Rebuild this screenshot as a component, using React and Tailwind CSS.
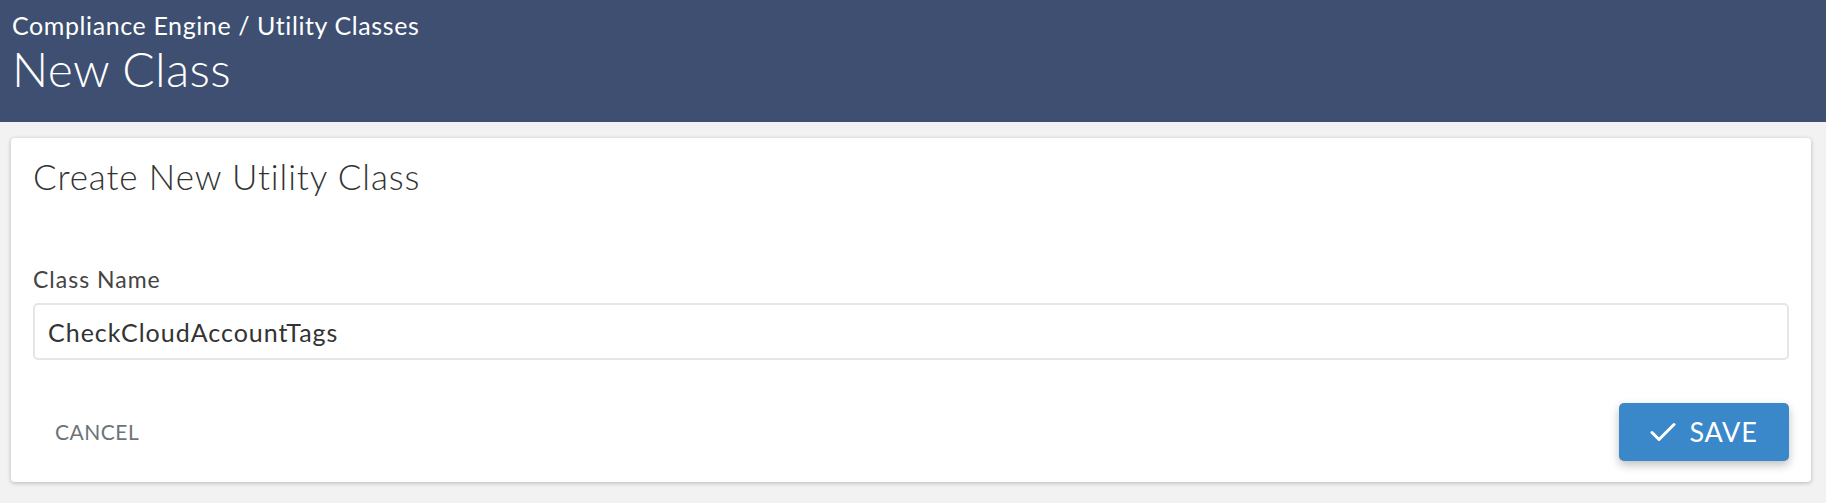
import React from 'react';

const CheckIcon = () => (
    <svg width="26" height="20" viewBox="0 0 26 20" fill="none" className="shrink-0">
        <path d="M2 10.5 L9 17.5 L24 2.5" stroke="white" strokeWidth="3" strokeLinecap="round" strokeLinejoin="round" />
    </svg>
);

export default function App() {
    return (
        <div className="min-h-screen bg-[#f2f2f2] font-['Lato',sans-serif]">
            {/* Page header */}
            <header className="h-[122px] bg-[#3e4f71] pl-3 pt-[11px] text-white">
                <div className="text-[25px] leading-[29px] tracking-[0.6px]">Compliance Engine / Utility Classes</div>
                <h1 className="text-[48px] font-light leading-[57px] tracking-[0.3px]">New Class</h1>
            </header>

            {/* Card */}
            <div className="mt-4 ml-[11px] mr-[15px] rounded-[4px] bg-white px-[22px] pt-[18px] pb-[21px] shadow-[0_1px_4px_rgba(0,0,0,0.25)]">
                <h2 className="text-[35px] font-light leading-[41px] tracking-[0.9px] text-[#333]">Create New Utility Class</h2>

                <label className="mt-[69px] block text-[23px] leading-[26px] tracking-[1px] text-[#444]">Class Name</label>
                <input
                    type="text"
                    defaultValue="CheckCloudAccountTags"
                    className="mt-[11px] block h-[57px] w-full rounded-[5px] border-2 border-[#e6e6e6] px-[13px] text-[25px] tracking-[1px] text-[#333] outline-none"
                />

                <div className="mt-[43px] flex items-center justify-between">
                    <button className="ml-[22px] text-[21px] tracking-[0.5px] text-[#6d7479]">CANCEL</button>
                    <button className="flex h-[58px] w-[170px] items-center justify-center gap-[13px] rounded-[5px] bg-[#3a88c9] text-[27px] tracking-[0.8px] text-white shadow-[0_4px_10px_rgba(0,0,0,0.25)]">
                        <CheckIcon />
                        <span>SAVE</span>
                    </button>
                </div>
            </div>
        </div>
    );
}
